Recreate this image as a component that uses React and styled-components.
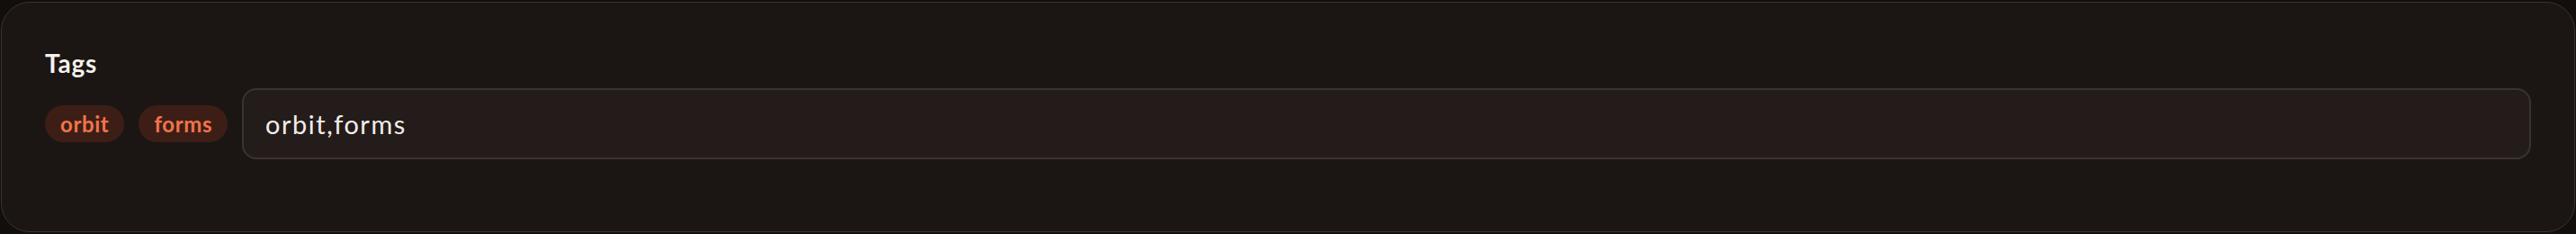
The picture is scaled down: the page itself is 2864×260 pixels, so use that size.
import styled, { createGlobalStyle } from "styled-components";

const GlobalStyle = createGlobalStyle`
  html, body {
    margin: 0;
    background: #110e0c;
  }
  body {
    padding: 2px 1px;
    font-family: Lato, "Noto Sans", sans-serif;
  }
`;

const Card = styled.section`
  box-sizing: border-box;
  height: 256px;
  padding: 49px 48px 0;
  background: #1b1613;
  border: 1px solid #3a3330;
  border-radius: 32px;
`;

const Label = styled.div`
  font-size: 28px;
  font-weight: 700;
  line-height: 36px;
  letter-spacing: 0.8px;
  color: #f6f1ed;
  margin-bottom: 10px;
`;

const Row = styled.div`
  display: flex;
  align-items: center;
  gap: 16px;
`;

const Tags = styled.div`
  display: flex;
  gap: 16px;
`;

const Tag = styled.span`
  display: inline-flex;
  align-items: center;
  height: 41px;
  padding: 0 17px;
  border-radius: 999px;
  background: #3d1e16;
  color: #f0744a;
  font-size: 24px;
  font-weight: 700;
  letter-spacing: 0.6px;
`;

const Field = styled.input`
  flex: 1;
  box-sizing: border-box;
  height: 79px;
  padding: 0 24px;
  background: #241c1a;
  border: 2px solid #3b3330;
  border-radius: 16px;
  color: #f2ede9;
  font-family: Lato, "Noto Sans", sans-serif;
  font-size: 29px;
  letter-spacing: 1.5px;
  outline: none;
`;

export default function App() {
  const tags = ["orbit", "forms"];
  return (
    <>
      <GlobalStyle />
      <Card>
        <Label>Tags</Label>
        <Row>
          <Tags>
            {tags.map((t) => (
              <Tag key={t}>{t}</Tag>
            ))}
          </Tags>
          <Field defaultValue={tags.join(",")} readOnly />
        </Row>
      </Card>
    </>
  );
}
